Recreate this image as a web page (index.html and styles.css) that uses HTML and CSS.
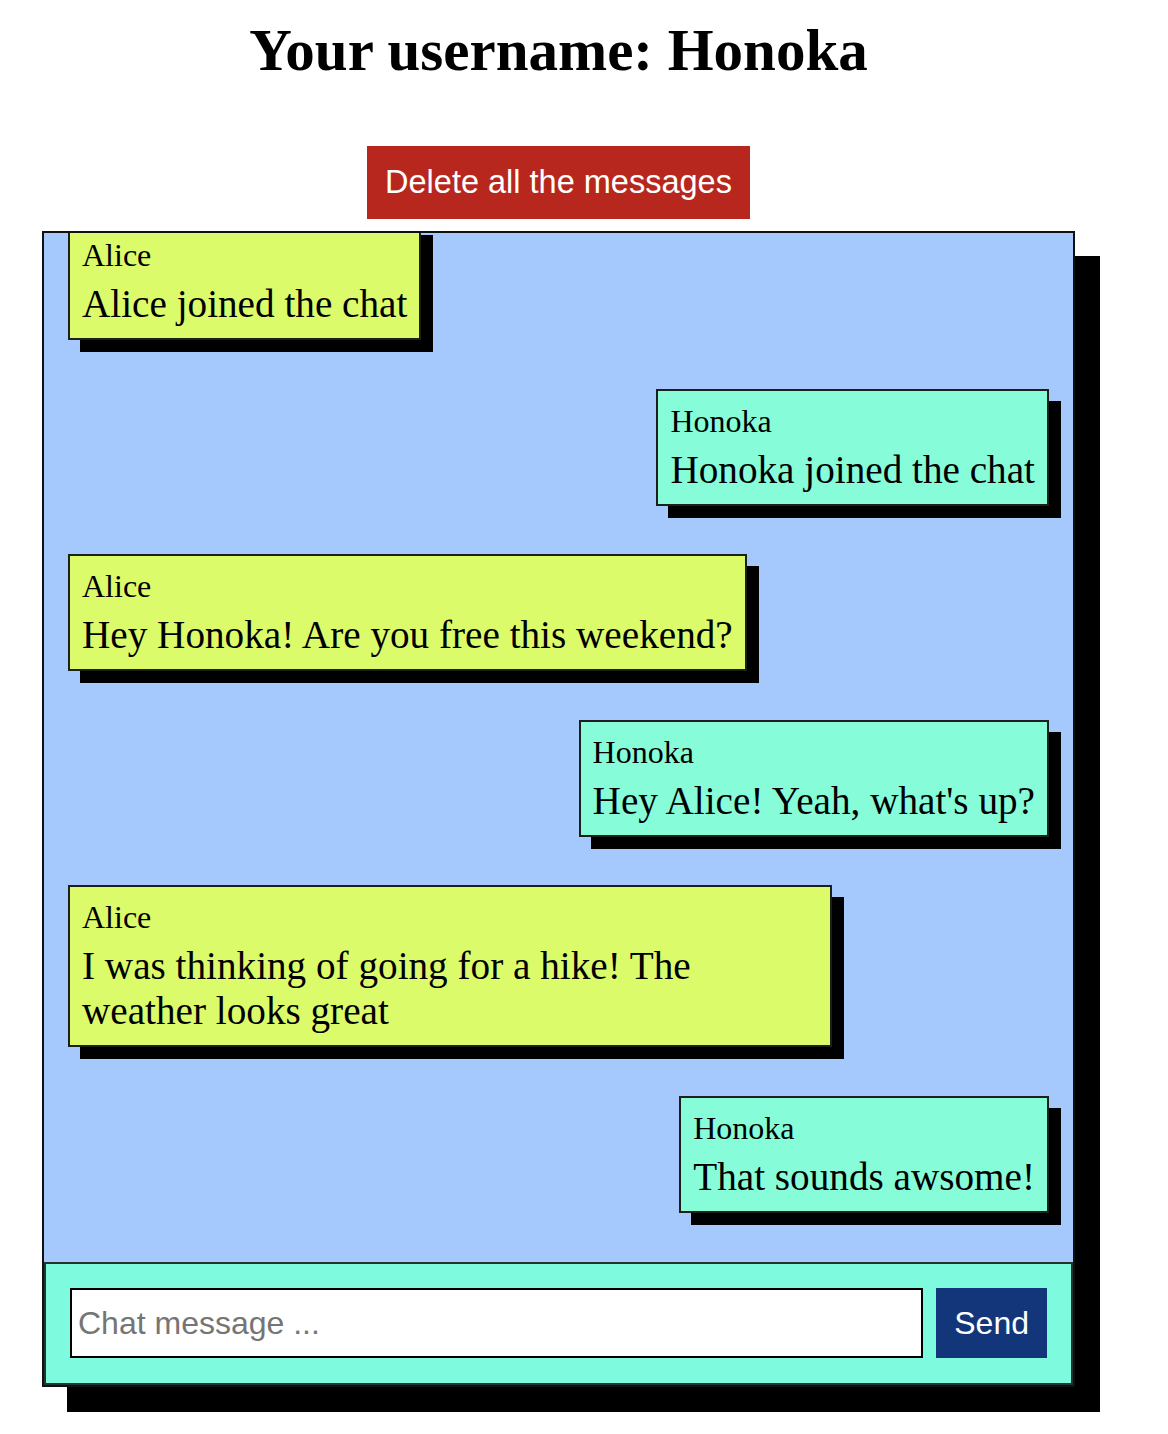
FILE: index.html
```html
<!DOCTYPE html>
<html lang="en">
<head>
    <meta charset="UTF-8">
    <meta name="viewport" content="width=device-width, initial-scale=1.0">
    <title>Chat</title>
    <link rel="stylesheet" href="styles.css">
</head>
<body>
    <div class="page">
        <h1 class="username">Your username: Honoka</h1>

        <div class="actions">
            <button class="delete-btn" type="button">Delete all the messages</button>
        </div>

        <div class="chat">
            <!-- Message list, newest at the bottom -->
            <div class="messages">
                <div class="msg">
                    <div class="msg-name">Alice</div>
                    <div class="msg-text">Alice joined the chat</div>
                </div>
                <div class="msg mine">
                    <div class="msg-name">Honoka</div>
                    <div class="msg-text">Honoka joined the chat</div>
                </div>
                <div class="msg">
                    <div class="msg-name">Alice</div>
                    <div class="msg-text">Hey Honoka! Are you free this weekend?</div>
                </div>
                <div class="msg mine">
                    <div class="msg-name">Honoka</div>
                    <div class="msg-text">Hey Alice! Yeah, what's up?</div>
                </div>
                <div class="msg">
                    <div class="msg-name">Alice</div>
                    <div class="msg-text">I was thinking of going for a hike! The weather looks great</div>
                </div>
                <div class="msg mine">
                    <div class="msg-name">Honoka</div>
                    <div class="msg-text">That sounds awsome!</div>
                </div>
            </div>

            <form class="composer" onsubmit="return false">
                <input class="composer-input" type="text" placeholder="Chat message ...">
                <button class="send-btn" type="submit">Send</button>
            </form>
        </div>
    </div>
</body>
</html>
```

FILE: styles.css
```css
body {
    margin: 0;
    font-family: "Liberation Serif", "Times New Roman", serif;
    background: #fff;
}
.page {
    width: 1117px;
    padding: 0 42px 40px;
    box-sizing: border-box;
}
.username {
    margin: 16px 0 61px;
    font-size: 59px;
    font-weight: bold;
    text-align: center;
    line-height: normal;
}
.actions {
    display: flex;
    justify-content: center;
}
.delete-btn {
    background-color: #b8271d;
    color: white;
    border: none;
    padding: 18px;
    font-family: "Liberation Sans", Arial, sans-serif;
    font-size: 32.5px;
    line-height: normal;
    cursor: pointer;
}
.chat {
    margin-top: 12px;
    height: 1156px;
    box-sizing: border-box;
    display: flex;
    flex-direction: column;
    border: 2px solid #111;
    background-color: #a5c9fc;
    box-shadow: 25px 25px 0 #000;
}
.messages {
    flex: 1;
    min-height: 0;
    overflow: hidden;
    display: flex;
    flex-direction: column;
    justify-content: flex-end;
    padding: 0 24px 1px;
}
.msg {
    flex-shrink: 0;
    align-self: flex-start;
    max-width: 75%;
    margin-bottom: 48.5px;
    padding: 12px;
    border: 2px solid #1c1f1a;
    background-color: #dcfb6a;
    box-shadow: 12px 12px 0 #000;
}
.msg.mine {
    align-self: flex-end;
    background-color: #86fcd9;
}
.msg-name {
    font-size: 32px;
    line-height: normal;
    margin-bottom: 7px;
}
.msg-text {
    font-size: 39.2px;
    line-height: normal;
}
.composer {
    display: flex;
    gap: 13px;
    margin: 0;
    padding: 24px 24px 25px;
    border: 2px solid #23332e;
    background-color: #7efadf;
}
.composer-input {
    flex: 1;
    height: 70px;
    box-sizing: border-box;
    padding: 0 6px;
    border: 2px solid #000;
    font-family: "Liberation Sans", Arial, sans-serif;
    font-size: 32px;
    background: #fff;
}
.composer-input::placeholder {
    color: #757575;
}
.send-btn {
    height: 70px;
    padding: 0 18px;
    border: none;
    background-color: #13367a;
    color: white;
    font-family: "Liberation Sans", Arial, sans-serif;
    font-size: 32px;
    cursor: pointer;
}
```
